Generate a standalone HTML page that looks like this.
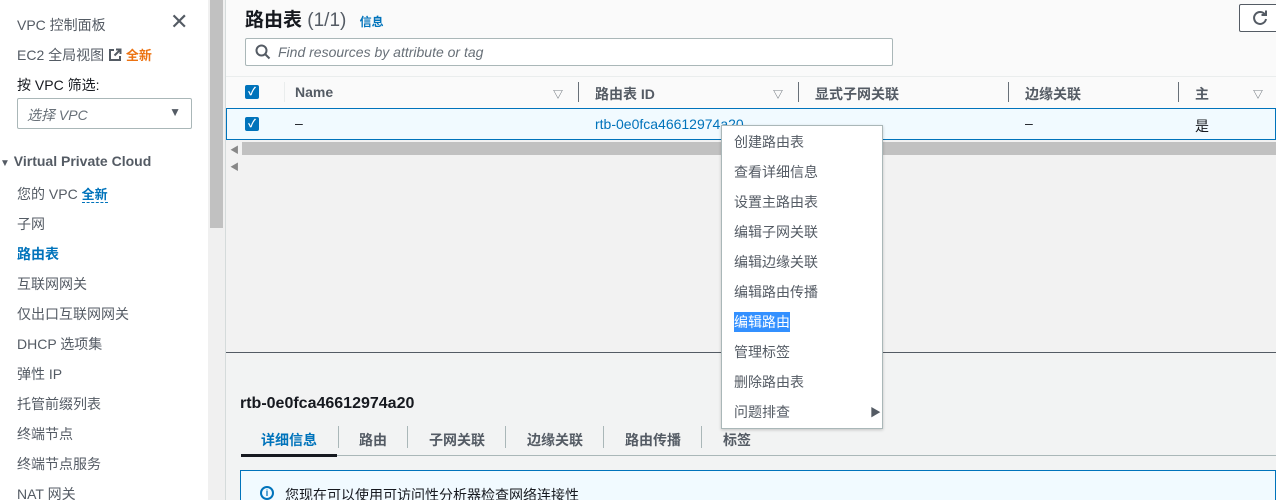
<!DOCTYPE html>
<html><head><meta charset="utf-8"><style>
*{box-sizing:border-box;margin:0;padding:0}
html,body{width:1276px;height:500px;overflow:hidden}
body{position:relative;background:#f2f3f3;font-family:"Liberation Sans","Noto Sans CJK SC",sans-serif;font-size:14px;color:#16191f}
.abs{position:absolute}
.side{left:0;top:0;width:208px;height:500px;background:#fff}
.side .it{position:absolute;left:17px;color:#545b64;font-size:14px;white-space:nowrap}
.sb{left:208px;top:0;width:18px;height:500px;background:#f0f0f0;border-right:1px solid #ddd}
.thumb{left:210px;top:0;width:13px;height:228px;background:#c1c1c1}
.main{left:226px;top:0;width:1050px;height:352px;background:#fafafa}
.cb{position:absolute;width:14px;height:14px;background:#0073bb;border-radius:2px;color:#fff;font-size:11px;line-height:14px;text-align:center;font-weight:bold}
.hd{position:absolute;font-weight:bold;color:#545b64;font-size:14px}
.sep{position:absolute;width:1px;height:20px;background:#687078}
.tri{position:absolute;font-size:10px;color:#545b64}
.menu{left:721px;top:125px;width:162px;height:304px;background:#fff;border:1px solid #aab7b8;box-shadow:0 1px 3px rgba(0,0,0,.2)}
.menu div{position:absolute;left:12px;font-size:14px;color:#545b64;white-space:nowrap}
.tab{position:absolute;top:430px;font-size:14px;color:#545b64;font-weight:bold}
.tsep{position:absolute;top:426px;width:1px;height:22px;background:#aab7b8}
</style></head><body>
<div class="abs side">
<div class="it" style="top:15px">VPC 控制面板</div>
<div class="abs" style="left:170px;top:9px;font-size:22px;color:#545b64">✕</div>
<div class="it" style="top:45px">EC2 全局视图 <svg width="14" height="14" viewBox="0 0 14 14" style="vertical-align:-2px"><path d="M6 2H2v10h10V8M8 1.5h4.5V6M12.5 1.5L6.5 7.5" fill="none" stroke="#545b64" stroke-width="2"/></svg> <span style="color:#ec7211;font-weight:bold;font-size:13px">全新</span></div>
<div class="it" style="top:75px;color:#16191f">按 VPC 筛选:</div>
<div class="abs" style="left:17px;top:98px;width:175px;height:31px;border:1px solid #aab7b8;border-radius:2px"><span style="position:absolute;left:9px;top:6px;font-style:italic;color:#687078">选择 VPC</span><span style="position:absolute;right:10px;top:6px;font-size:12px;color:#545b64">▼</span></div>
<div class="abs" style="left:0;top:153px;font-weight:bold;color:#545b64;font-size:14px"><span style="font-size:10px">▼</span> Virtual Private Cloud</div>
<div class="it" style="top:184px">您的 VPC <span style="color:#0073bb;font-weight:bold;font-size:13px;border-bottom:1px dashed #0073bb">全新</span></div>
<div class="it" style="top:214px">子网</div>
<div class="it" style="top:244px;color:#0073bb;font-weight:bold">路由表</div>
<div class="it" style="top:274px">互联网网关</div>
<div class="it" style="top:304px">仅出口互联网网关</div>
<div class="it" style="top:334px">DHCP 选项集</div>
<div class="it" style="top:364px">弹性 IP</div>
<div class="it" style="top:394px">托管前缀列表</div>
<div class="it" style="top:424px">终端节点</div>
<div class="it" style="top:454px">终端节点服务</div>
<div class="it" style="top:484px">NAT 网关</div>
</div>
<div class="abs sb"></div><div class="abs thumb"></div>
<div class="abs main">
<div class="abs" style="left:19px;top:5px;font-size:19px;font-weight:bold">路由表 <span style="font-weight:normal;color:#545b64">(1/1)</span> <span style="font-size:12px;color:#0073bb;margin-left:8px">信息</span></div>
<div class="abs" style="left:1013px;top:4px;width:40px;height:28px;border:1px solid #545b64;border-radius:2px;background:#fff"><svg width="18" height="18" viewBox="0 0 18 18" style="position:absolute;left:11px;top:4px"><path d="M14 5.5A6 6 0 1 0 15 10" fill="none" stroke="#545b64" stroke-width="2"/><path d="M15 1.5V6H10.5" fill="none" stroke="#545b64" stroke-width="2"/></svg></div>
<div class="abs" style="left:19px;top:38px;width:648px;height:28px;border:1px solid #aab7b8;border-radius:2px;background:#fff"><svg width="16" height="16" viewBox="0 0 16 16" style="position:absolute;left:9px;top:5px"><circle cx="6.5" cy="6.5" r="5" fill="none" stroke="#545b64" stroke-width="2"/><path d="M10 10l4.5 4.5" stroke="#545b64" stroke-width="2"/></svg><span style="position:absolute;left:32px;top:5px;font-style:italic;color:#687078">Find resources by attribute or tag</span></div>
<div class="abs" style="left:0;top:76px;width:1050px;height:32px;background:#fafafa;border-top:1px solid #eaeded"></div>
<div class="cb" style="left:19px;top:85px">✓</div>
<div class="sep" style="left:58px;top:82px;background:#eaeded"></div>
<div class="hd" style="left:69px;top:84px">Name</div><div class="tri" style="left:327px;top:86px">▽</div>
<div class="sep" style="left:352px;top:82px"></div>
<div class="hd" style="left:369px;top:84px">路由表 ID</div><div class="tri" style="left:547px;top:86px">▽</div>
<div class="sep" style="left:572px;top:82px"></div>
<div class="hd" style="left:589px;top:84px">显式子网关联</div>
<div class="sep" style="left:782px;top:82px"></div>
<div class="hd" style="left:799px;top:84px">边缘关联</div>
<div class="sep" style="left:952px;top:82px"></div>
<div class="hd" style="left:969px;top:84px">主</div><div class="tri" style="left:1027px;top:86px">▽</div>
<div class="abs" style="left:0;top:108px;width:1050px;height:32px;background:#f1faff;border:1px solid #0073bb"></div>
<div class="cb" style="left:19px;top:117px">✓</div>
<div class="abs" style="left:69px;top:115px">–</div>
<div class="abs" style="left:369px;top:116px;color:#0073bb">rtb-0e0fca46612974a20</div>
<div class="abs" style="left:799px;top:115px">–</div>
<div class="abs" style="left:969px;top:116px">是</div>
<div class="abs" style="left:0;top:140px;width:1050px;height:212px;background:#f2f2f2"></div>
<div class="abs" style="left:16px;top:142px;width:1034px;height:13px;background:#c1c1c1"></div>
<div class="abs" style="left:4px;top:143px;font-size:9px;color:#888">◀</div>
<div class="abs" style="left:4px;top:160px;font-size:9px;color:#888">◀</div>
<div class="abs" style="left:0;top:352px;width:1050px;height:1px;background:#545b64"></div>
</div>
<div class="abs" style="left:225px;top:0;width:1px;height:500px;background:#d5dbdb"></div>
<div class="abs" style="left:240px;top:395px;font-size:16px;font-weight:bold">rtb-0e0fca46612974a20</div>
<div class="tab" style="left:261px;color:#0073bb">详细信息</div>
<div class="abs" style="left:241px;top:455px;width:1035px;height:1px;background:#aab7b8"></div>
<div class="abs" style="left:241px;top:454px;width:96px;height:3px;background:#16191f"></div>
<div class="tsep" style="left:338px"></div><div class="tab" style="left:359px">路由</div>
<div class="tsep" style="left:407px"></div><div class="tab" style="left:429px">子网关联</div>
<div class="tsep" style="left:505px"></div><div class="tab" style="left:527px">边缘关联</div>
<div class="tsep" style="left:603px"></div><div class="tab" style="left:625px">路由传播</div>
<div class="tsep" style="left:701px"></div><div class="tab" style="left:723px">标签</div>
<div class="abs" style="left:240px;top:470px;width:1036px;height:40px;background:#f1faff;border:1px solid #0073bb"></div>
<div class="abs" style="left:260px;top:486px;width:14px;height:14px;border:2px solid #0073bb;border-radius:50%;font-size:9px;font-weight:bold;color:#0073bb;text-align:center;line-height:10px">i</div>
<div class="abs" style="left:285px;top:485px">您现在可以使用可访问性分析器检查网络连接性</div>
<div class="abs menu">
<div style="top:6px">创建路由表</div>
<div style="top:36px">查看详细信息</div>
<div style="top:66px">设置主路由表</div>
<div style="top:96px">编辑子网关联</div>
<div style="top:126px">编辑边缘关联</div>
<div style="top:156px">编辑路由传播</div>
<div style="top:186px;background:#3390ff;color:#fff">编辑路由</div>
<div style="top:216px">管理标签</div>
<div style="top:246px">删除路由表</div>
<div style="top:276px">问题排查</div>
<div style="top:278px;left:148px;font-size:11px">▶</div>
</div>
</body></html>
